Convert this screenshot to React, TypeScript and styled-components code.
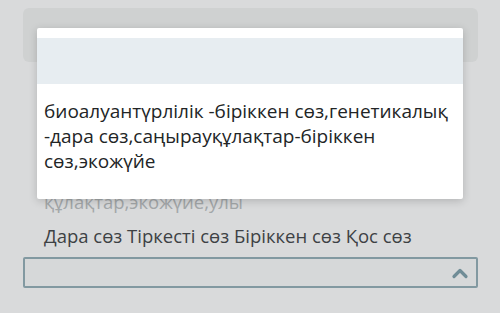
import styled, { createGlobalStyle } from 'styled-components'

const GlobalStyle = createGlobalStyle`
	html, body {
		margin: 0;
		padding: 0;
		background: #d9dadb;
	}
	body {
		font-family: 'Open Sans', 'Noto Sans', sans-serif;
	}
`

const Page = styled.div`
	position: relative;
	width: 500px;
	height: 313px;
	overflow: hidden;
	box-sizing: border-box;
	padding: 8px 22px 0 23px;
	background: #d9dadb;
`

const HeaderBox = styled.div`
	height: 54px;
	border-radius: 6px;
	background: #cfd1d1;
`

const FadedLine = styled.p`
	margin: 128px 0 0 21px;
	font-size: 18.5px;
	line-height: 24px;
	color: #a3a7a9;
	white-space: nowrap;
`

const Options = styled.p`
	margin: 10px 0 0 21px;
	font-size: 18.5px;
	line-height: 24px;
	color: #3d4144;
	white-space: nowrap;
`

const SelectBox = styled.div`
	margin-top: 9px;
	height: 31px;
	box-sizing: border-box;
	border: 2px solid #8299a1;
	border-radius: 2px;
	background: #d6d8d9;
	display: flex;
	align-items: center;
	justify-content: flex-end;
	padding-right: 7px;
`

const Panel = styled.div`
	position: absolute;
	left: 37px;
	top: 28px;
	width: 426px;
	height: 171px;
	background: #ffffff;
	border-radius: 2px;
	box-shadow: 0 2px 8px rgba(0, 0, 0, 0.18);
	display: flex;
	flex-direction: column;
`

const Band = styled.div`
	margin-top: 10px;
	height: 46px;
	background: #e7edf1;
`

const PanelText = styled.p`
	margin: 15px 0 0;
	padding: 0 7px;
	font-size: 19px;
	line-height: 25px;
	color: #222526;
`

function ChevronUp() {
	return (
		<svg width="18" height="12" viewBox="0 0 18 12">
			<path
				d="M3 9.5 L9 3.5 L15 9.5"
				fill="none"
				stroke="#6f8c96"
				strokeWidth="3.2"
				strokeLinecap="round"
				strokeLinejoin="round"
			/>
		</svg>
	)
}

export default function App() {
	return (
		<>
			<GlobalStyle />
			<Page>
				<HeaderBox />
				<FadedLine>құлақтар,экожүйе,улы</FadedLine>
				<Options>Дара сөз Тіркесті сөз Біріккен сөз Қос сөз</Options>
				<SelectBox>
					<ChevronUp />
				</SelectBox>
				<Panel>
					<Band />
					<PanelText>
						биоалуантүрлілік -біріккен сөз,генетикалық -дара
						сөз,саңырауқұлақтар-біріккен сөз,экожүйе
					</PanelText>
				</Panel>
			</Page>
		</>
	)
}
